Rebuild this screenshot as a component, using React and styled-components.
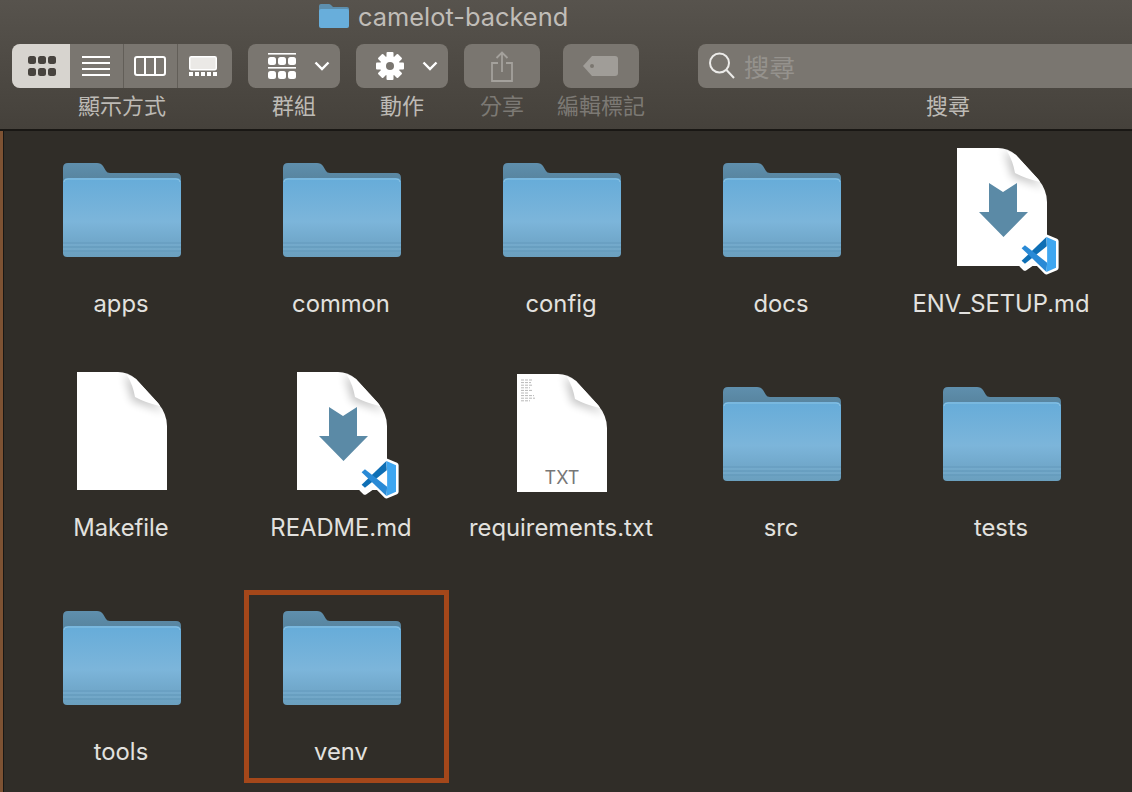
import React from 'react'
import styled, { createGlobalStyle } from 'styled-components'

const Global = createGlobalStyle`
  html, body { margin: 0; padding: 0; height: 792px; overflow: hidden; background: #302d28; }
  body { font-family: Inter, "Noto Sans CJK TC", sans-serif; }
`

const Window = styled.div`
  width: 1132px;
  height: 792px;
  overflow: hidden;
  display: flex;
  flex-direction: column;
`

const Header = styled.header`
  height: 129px;
  flex: none;
  background: linear-gradient(#57534d, #45413b);
  border-bottom: 2px solid #191714;
  box-sizing: content-box;
  overflow: hidden;
`

const TitleRow = styled.div`
  height: 44px;
  padding: 4px 0 0 319px;
  box-sizing: border-box;
  display: flex;
  align-items: flex-start;
  gap: 9px;
`

const Title = styled.div`
  margin-top: -4px;
  font-size: 25.4px;
  line-height: 34px;
  color: #c0bdb8;
`

const Toolbar = styled.div`
  display: flex;
  padding-left: 12px;
`

const Group = styled.div`
  flex: none;
  width: ${p => p.$w}px;
  margin-right: ${p => p.$gap || 0}px;
  display: flex;
  flex-direction: column;
  align-items: center;
`

const Buttons = styled.div`
  width: 100%;
  height: 44px;
  display: flex;
  border-radius: 8px;
  overflow: hidden;
  background: #7a7670;
`

const Seg = styled.div`
  flex: none;
  width: ${p => p.$w}px;
  height: 44px;
  display: flex;
  align-items: center;
  justify-content: center;
  box-sizing: border-box;
  padding-left: ${p => p.$pl || 0}px;
  padding-right: ${p => p.$pr || 0}px;
  background: ${p => (p.$active ? '#d7d4cf' : 'transparent')};
  border-left: ${p => (p.$sep ? '1.5px solid #625e58' : 'none')};
`

const Button = styled.div`
  width: 100%;
  height: 44px;
  border-radius: 8px;
  background: #7a7670;
  display: flex;
  align-items: center;
  justify-content: ${p => (p.$menu ? 'flex-start' : 'center')};
  padding-left: ${p => p.$pad || 0}px;
  box-sizing: border-box;
`

const Chevron = styled.svg`
  margin-left: ${p => p.$ml}px;
`

const Label = styled.div`
  margin-top: 5px;
  font-size: 22px;
  line-height: 26px;
  white-space: nowrap;
  color: ${p => (p.$off ? '#7c7974' : '#bdbab5')};
`

const SearchBox = styled.div`
  width: 100%;
  height: 44px;
  border-radius: 8px 0 0 8px;
  background: #7a7670;
  display: flex;
  align-items: center;
  gap: 8px;
  padding-left: 10px;
  box-sizing: border-box;
`

const Placeholder = styled.span`
  margin-bottom: 2px;
  font-size: 25.5px;
  color: #95928d;
`

const Content = styled.main`
  flex: 1;
  border-left: 3px solid #7d5233;
  background: #302d28;
  box-shadow: inset 1px 0 0 #191714;
`

const Grid = styled.div`
  display: grid;
  grid-template-columns: repeat(5, 220px);
  grid-auto-rows: 224px;
  padding: 15px 0 0 8px;
`

const Cell = styled.div`
  position: relative;
  display: flex;
  flex-direction: column;
  align-items: center;
`

const Highlight = styled.div`
  position: absolute;
  left: 13px;
  top: -4px;
  width: 205px;
  height: 193px;
  box-sizing: border-box;
  border: 5px solid #a4471a;
`

const Name = styled.div`
  margin-top: 14px;
  font-size: 23.8px;
  line-height: 28px;
  color: #e2e1df;
  white-space: nowrap;
`

const PAGE = 'M21 2 H62 Q72 2 80 9 L102 33 Q111 44 111 56 V120 H21 Z'

const Defs = () => (
  <svg width="0" height="0" style={{ position: 'absolute' }}>
    <defs>
      <linearGradient id="front" x1="0" y1="0" x2="0" y2="1">
        <stop offset="0" stopColor="#66acd9" />
        <stop offset="0.55" stopColor="#7cb5da" />
        <stop offset="0.78" stopColor="#72a9cc" />
        <stop offset="1" stopColor="#6a9fbe" />
      </linearGradient>
      <linearGradient id="tab" x1="0" y1="0" x2="0" y2="1">
        <stop offset="0" stopColor="#5f8fad" />
        <stop offset="1" stopColor="#4c7389" />
      </linearGradient>
      <filter id="soft" x="-30%" y="-30%" width="160%" height="160%">
        <feGaussianBlur stdDeviation="4" />
      </filter>
      <clipPath id="pageClip">
        <path d={PAGE} />
      </clipPath>
    </defs>
  </svg>
)

const FolderIcon = () => (
  <svg width="130" height="130" viewBox="0 0 130 130">
    <path d="M7 22 Q7 17 12 17 H41 Q45 17 47 20 L50 25 Q51 27 54 27 H120 Q125 27 125 32 V60 H7 Z" fill="url(#tab)" />
    <path d="M7 37 Q7 32 12 32 H120 Q125 32 125 37 V107 Q125 111 121 111 H11 Q7 111 7 107 Z" fill="url(#front)" />
    <path d="M8 36 Q8 33 12 33 H120 Q124 33 124 36" fill="none" stroke="#8cc3e4" strokeWidth="1" />
    <path d="M7 97 H125 M7 101 H125 M7 105 H125" stroke="#5a90b2" strokeWidth="1" opacity="0.55" />
    <path d="M7 99 H125 M7 103 H125" stroke="#85b8d6" strokeWidth="1" opacity="0.4" />
  </svg>
)

const Page = ({ children, y = 2 }) => (
  <svg width="130" height="130" viewBox="0 0 130 130">
    <g transform={`translate(0 ${y - 2})`}>
      <path d={PAGE} fill="#fff" />
      <g clipPath="url(#pageClip)">
        <path d="M68 4 L76 31 L108 42 L80 12 Z" fill="#000" opacity="0.22" filter="url(#soft)" />
      </g>
      <path d="M71 5 Q75 6 80 9 L102 33 Q103 34 104 36 Q90 33 79 27 Q77 15 71 5 Z" fill="#fff" />
    </g>
    {children}
  </svg>
)

const VsBadge = () => (
  <g transform="translate(84.5 90) scale(0.37)">
    <path d="M70 3 L96 14 V86 L70 97 L40 67 L12 87 L3 78 V22 L12 13 L40 33 Z" fill="#fff" stroke="#fff" strokeWidth="14" strokeLinejoin="round" />
    <path d="M71 28 L12 75 L3 67 L70 3 Z" fill="#0e6fb5" />
    <path d="M72 72 L12 25 L3 33 L70 97 Z" fill="#2a8ad6" />
    <path d="M70 3 L96 14 V86 L70 97 L72 72 V28 Z" fill="#3ea6f0" />
  </g>
)

const MarkdownIcon = () => (
  <Page>
    <path d="M53 37 L67 46 L81 37 V66 H92 L67.5 91 L43 66 H53 Z" fill="#5b8aa6" />
    <VsBadge />
  </Page>
)

const textLines = [12, 10, 11, 9, 12, 8, 13, 14, 9]

const TextIcon = () => (
  <Page y={4}>
    {textLines.map((w, i) => (
      <line key={i} x1="25" x2={25 + w} y1={10 + i * 2.6} y2={10 + i * 2.6} stroke="#b8b8b8" strokeWidth="1" strokeDasharray="3 1" />
    ))}
    <text x="66" y="114" textAnchor="middle" fontFamily="Inter, sans-serif" fontSize="18" fill="#777">TXT</text>
  </Page>
)

const icons = {
  folder: <FolderIcon />,
  md: <MarkdownIcon />,
  blank: <Page />,
  txt: <TextIcon />,
}

const items = [
  ['apps', 'folder'],
  ['common', 'folder'],
  ['config', 'folder'],
  ['docs', 'folder'],
  ['ENV_SETUP.md', 'md'],
  ['Makefile', 'blank'],
  ['README.md', 'md'],
  ['requirements.txt', 'txt'],
  ['src', 'folder'],
  ['tests', 'folder'],
  ['tools', 'folder'],
  ['venv', 'folder', true],
]

const ChevronDown = ({ ml }) => (
  <Chevron $ml={ml} width="16" height="10" viewBox="0 0 16 10">
    <path d="M1.5 1.5 L8 8 L14.5 1.5" fill="none" stroke="#fff" strokeWidth="2.4" />
  </Chevron>
)

const IconGrid = () => (
  <svg width="28" height="20" viewBox="0 0 28 20" fill="#47433e">
    {[0, 10, 20].map(x => [0, 12].map(y => <rect key={`${x}-${y}`} x={x} y={y} width="8" height="8" rx="2.5" />))}
  </svg>
)

const IconList = () => (
  <svg width="28" height="20" viewBox="0 0 28 20" fill="#fff">
    {[0, 6, 12, 18].map(y => <rect key={y} y={y} width="28" height="2" />)}
  </svg>
)

const IconColumns = () => (
  <svg width="32" height="20" viewBox="0 0 32 20" fill="none" stroke="#fff" strokeWidth="2">
    <rect x="1" y="1" width="30" height="18" rx="2" />
    <path d="M11 1 V19 M21 1 V19" />
  </svg>
)

const IconGallery = () => (
  <svg width="28" height="20" viewBox="0 0 28 20">
    <rect x="0.75" y="0.75" width="26.5" height="13" rx="1.5" fill="#ebe9e6" stroke="#fff" strokeWidth="1.5" />
    {[0, 6, 12, 18, 24].map(x => <rect key={x} x={x} y="16" width="4" height="4" fill="#fff" />)}
  </svg>
)

const IconGroupBy = () => (
  <svg width="28" height="26" viewBox="0 0 28 26" fill="#fff">
    <rect width="28" height="1.6" />
    <rect y="14" width="28" height="1.6" />
    {[0, 10, 20].map(x => [4, 18].map(y => <rect key={`${x}-${y}`} x={x} y={y} width="8" height="8" rx="2.5" />))}
  </svg>
)

const IconGear = () => (
  <svg width="30" height="30" viewBox="0 0 30 30">
    {[0, 45, 90, 135].map(a => (
      <rect key={a} x="11.5" y="1" width="7" height="28" rx="1" fill="#fff" transform={`rotate(${a} 15 15)`} />
    ))}
    <circle cx="15" cy="15" r="10" fill="#fff" />
    <circle cx="15" cy="15" r="4" fill="#7a7670" />
  </svg>
)

const IconShare = () => (
  <svg width="22" height="31" viewBox="0 0 22 31" fill="none" stroke="#a4a19c" strokeWidth="1.8">
    <path d="M7 12 H1 V30 H21 V12 H15" />
    <path d="M11 21 V2 M5.5 7 L11 1.5 L16.5 7" />
  </svg>
)

const IconTag = () => (
  <svg width="36" height="20" viewBox="0 0 36 20">
    <path d="M9 0 H32 Q35 0 35 3 V17 Q35 20 32 20 H9 L0 10 Z" fill="#a09d98" />
    <circle cx="9" cy="10" r="2" fill="#7a7670" />
  </svg>
)

const IconSearch = () => (
  <svg width="28" height="28" viewBox="0 0 28 28" fill="none" stroke="#ecebe9" strokeWidth="2">
    <circle cx="11.5" cy="11" r="9.5" />
    <path d="M18.5 18 L26 26" />
  </svg>
)

const TitleFolder = () => (
  <svg width="30" height="24" viewBox="0 0 30 24">
    <path d="M0 2 Q0 0 2 0 H10 Q11 0 12 1 L14 3 H28 Q30 3 30 5 V10 H0 Z" fill="#5d8fae" />
    <rect y="5" width="30" height="19" rx="2" fill="#68aedb" />
  </svg>
)

export default function App() {
  return (
    <Window>
      <Global />
      <Defs />
      <Header>
        <TitleRow>
          <TitleFolder />
          <Title>camelot-backend</Title>
        </TitleRow>
        <Toolbar>
          <Group $w={220} $gap={16}>
            <Buttons>
              <Seg $w={58} $active $pl={2}><IconGrid /></Seg>
              <Seg $w={53} $pr={1}><IconList /></Seg>
              <Seg $w={54} $sep $pr={1}><IconColumns /></Seg>
              <Seg $w={55} $sep $pr={5}><IconGallery /></Seg>
            </Buttons>
            <Label>顯示方式</Label>
          </Group>
          <Group $w={92} $gap={16}>
            <Button $menu $pad={20}><IconGroupBy /><ChevronDown ml={18} /></Button>
            <Label>群組</Label>
          </Group>
          <Group $w={92} $gap={16}>
            <Button $menu $pad={19}><IconGear /><ChevronDown ml={17} /></Button>
            <Label>動作</Label>
          </Group>
          <Group $w={76} $gap={23}>
            <Button><IconShare /></Button>
            <Label $off>分享</Label>
          </Group>
          <Group $w={76} $gap={59}>
            <Button><IconTag /></Button>
            <Label $off>編輯標記</Label>
          </Group>
          <Group $w={500}>
            <SearchBox>
              <IconSearch />
              <Placeholder>搜尋</Placeholder>
            </SearchBox>
            <Label>搜尋</Label>
          </Group>
        </Toolbar>
      </Header>
      <Content>
        <Grid>
          {items.map(([name, icon, marked]) => (
            <Cell key={name}>
              {icons[icon]}
              <Name>{name}</Name>
              {marked && <Highlight />}
            </Cell>
          ))}
        </Grid>
      </Content>
    </Window>
  )
}
